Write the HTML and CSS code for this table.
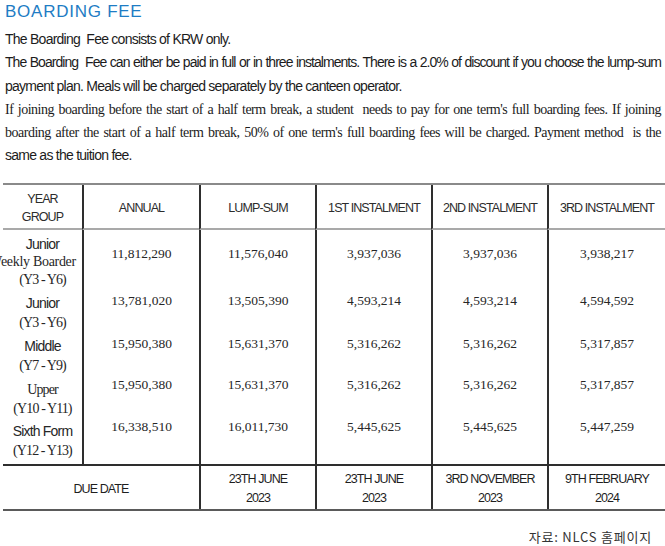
FILE: index.html
```html
<!DOCTYPE html>
<html lang="en">
<head>
<meta charset="utf-8">
<title>Boarding Fee</title>
<link rel="stylesheet" href="styles.css">
</head>
<body>
<main class="page">
  <h1 class="title">BOARDING FEE</h1>
  <div class="intro">
    <p class="line sans">The Boarding&nbsp; Fee consists of KRW only.</p>
    <p class="line sans just">The Boarding&nbsp; Fee can either be paid in full or in three instalments. There is a 2.0% of discount if you choose the lump-sum</p>
    <p class="line sans">payment plan. Meals will be charged separately by the canteen operator.</p>
    <p class="line serif just">If joining boarding before the start of a half term break, a student&nbsp; needs to pay for one term's full boarding fees. If joining</p>
    <p class="line serif just">boarding after the start of a half term break, 50% of one term's full boarding fees will be charged. Payment method&nbsp; is the</p>
    <p class="line sans">same as the tuition fee.</p>
  </div>

  <div class="fee-table">
    <div class="cell head first"><span>YEAR</span><span>GROUP</span></div>
    <div class="cell head">ANNUAL</div>
    <div class="cell head">LUMP-SUM</div>
    <div class="cell head">1ST INSTALMENT</div>
    <div class="cell head">2ND INSTALMENT</div>
    <div class="cell head">3RD INSTALMENT</div>

    <div class="cell name first r1"><span class="nm">Junior</span><span class="sub shift">Weekly Boarder</span><span class="sub">(Y3 - Y6)</span></div>
    <div class="cell num r1 n1">11,812,290</div>
    <div class="cell num r1 n1">11,576,040</div>
    <div class="cell num r1 n1">3,937,036</div>
    <div class="cell num r1 n1">3,937,036</div>
    <div class="cell num r1 n1">3,938,217</div>

    <div class="cell name first"><span class="nm">Junior</span><span class="sub">(Y3 - Y6)</span></div>
    <div class="cell num">13,781,020</div>
    <div class="cell num">13,505,390</div>
    <div class="cell num">4,593,214</div>
    <div class="cell num">4,593,214</div>
    <div class="cell num">4,594,592</div>

    <div class="cell name first"><span class="nm">Middle</span><span class="sub">(Y7 - Y9)</span></div>
    <div class="cell num">15,950,380</div>
    <div class="cell num">15,631,370</div>
    <div class="cell num">5,316,262</div>
    <div class="cell num">5,316,262</div>
    <div class="cell num">5,317,857</div>

    <div class="cell name first"><span class="sub">Upper</span><span class="sub">(Y10 - Y11)</span></div>
    <div class="cell num tight">15,950,380</div>
    <div class="cell num tight">15,631,370</div>
    <div class="cell num tight">5,316,262</div>
    <div class="cell num tight">5,316,262</div>
    <div class="cell num tight">5,317,857</div>

    <div class="cell name first"><span class="nm">Sixth Form</span><span class="sub">(Y12 - Y13)</span></div>
    <div class="cell num tight">16,338,510</div>
    <div class="cell num tight">16,011,730</div>
    <div class="cell num tight">5,445,625</div>
    <div class="cell num tight">5,445,625</div>
    <div class="cell num tight">5,447,259</div>

    <div class="cell due first span2">DUE DATE</div>
    <div class="cell due"><span>23TH JUNE</span><span>2023</span></div>
    <div class="cell due"><span>23TH JUNE</span><span>2023</span></div>
    <div class="cell due"><span>3RD NOVEMBER</span><span>2023</span></div>
    <div class="cell due"><span>9TH FEBRUARY</span><span>2024</span></div>
  </div>

  <p class="source">자료: NLCS 홈페이지</p>
</main>
</body>
</html>
```

FILE: styles.css
```css
* { box-sizing: border-box; }

html, body {
  margin: 0;
  padding: 0;
  background: #ffffff;
}

.page {
  width: 665px;
  height: 546px;
  overflow: hidden;
  color: #1c1c1c;
}

.title {
  margin: 0;
  padding: 1px 0 0 5px;
  font-family: "Liberation Sans", Arial, sans-serif;
  font-weight: 400;
  font-size: 17px;
  line-height: 22px;
  letter-spacing: 0.75px;
  color: #1e7cc4;
}

.intro {
  padding: 5px 4px 0 5px;
}

.line {
  margin: 0;
  height: 23.3px;
  line-height: 23.3px;
  white-space: nowrap;
  font-size: 14px;
}

.sans {
  font-family: "Liberation Sans", Arial, sans-serif;
  letter-spacing: -0.75px;
}

.sans.just {
  letter-spacing: -0.95px;
}

.serif {
  font-family: "Liberation Serif", "Times New Roman", serif;
  letter-spacing: -0.5px;
}

.just {
  text-align: justify;
  text-align-last: justify;
}

/* table */
.fee-table {
  display: grid;
  grid-template-columns: 79px 117px 116px 116px 116px 118px;
  grid-template-rows: 45px 59px 43px 43px 42px 47px 45px;
  margin: 15px 0 0 3px;
  border-top: 2px solid #8a8a8a;
  border-bottom: 2px solid #5a5a5a;
  color: #262626;
}

.cell {
  border-left: 2px solid #2e2e2e;
  min-width: 0;
}

.cell.first {
  border-left: none;
}

.head {
  display: flex;
  flex-direction: column;
  align-items: center;
  justify-content: center;
  padding-top: 4px;
  border-bottom: 2px solid #a9a9a9;
  font-family: "Liberation Sans", Arial, sans-serif;
  font-size: 12.5px;
  line-height: 18px;
  letter-spacing: -0.9px;
  color: #2c2c2c;
}

.name {
  display: flex;
  flex-direction: column;
  align-items: center;
  padding-top: 5px;
  line-height: 19px;
  white-space: nowrap;
}

.name.r1 {
  line-height: 18px;
}

.nm {
  font-family: "Liberation Sans", Arial, sans-serif;
  font-size: 14px;
  letter-spacing: -0.8px;
}

.sub {
  font-family: "Liberation Serif", "Times New Roman", serif;
  font-size: 14px;
  letter-spacing: -0.9px;
}

.sub.shift {
  letter-spacing: -0.3px;
  margin-right: 20px;
}

.num {
  padding-top: 2px;
  text-align: center;
  font-family: "Liberation Serif", "Times New Roman", serif;
  font-size: 13.5px;
  line-height: 19px;
  letter-spacing: 0;
}

.num.n1 {
  padding-top: 14px;
}

.num.tight {
  padding-top: 0;
}

.due {
  display: flex;
  flex-direction: column;
  align-items: center;
  justify-content: center;
  padding-top: 4px;
  border-top: 2px solid #2e2e2e;
  font-family: "Liberation Sans", Arial, sans-serif;
  font-size: 12.5px;
  line-height: 19px;
  letter-spacing: -0.9px;
  color: #1e1e1e;
}

.span2 {
  grid-column: span 2;
}

.source {
  margin: 17px 13px 0 0;
  text-align: right;
  font-family: "Noto Sans CJK KR", "Liberation Sans", sans-serif;
  font-size: 13px;
  line-height: 18px;
  letter-spacing: 0.8px;
  color: #333;
}
```
